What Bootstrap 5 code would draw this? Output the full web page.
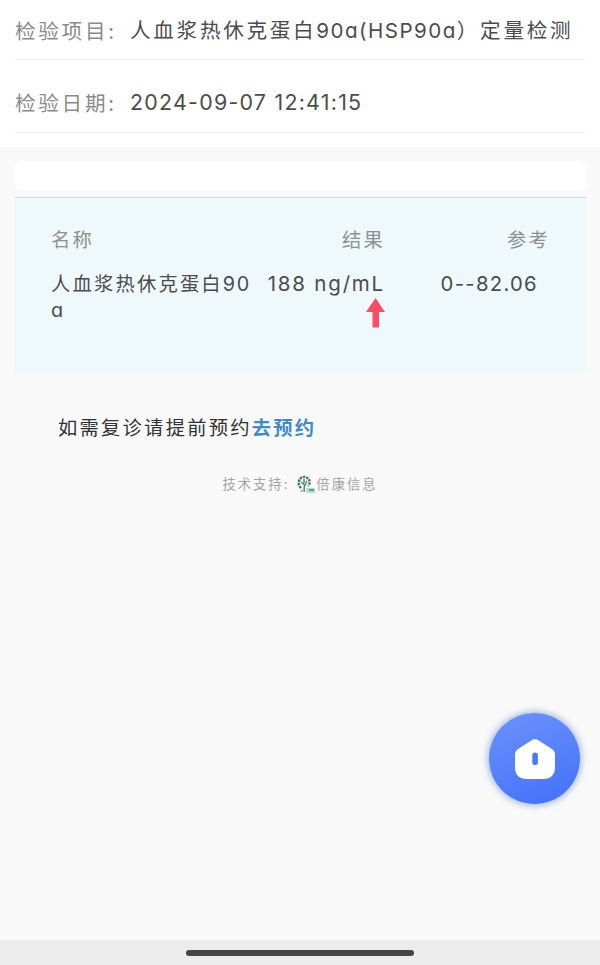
<!DOCTYPE html>
<html lang="zh-CN">
<head>
<meta charset="utf-8">
<meta name="viewport" content="width=device-width, initial-scale=1">
<title>检验结果</title>
<link href="https://cdn.jsdelivr.net/npm/bootstrap@5.3.0/dist/css/bootstrap.min.css" rel="stylesheet">
<style>
body{background:#f9f9f9;font-family:"Noto Sans CJK SC",sans-serif;color:#4b4c4e;height:965px;overflow:hidden}
.latin{font-family:Inter,"Noto Sans",sans-serif;font-feature-settings:"cv11";font-weight:400}
.info{height:147px;padding:0 15px;font-size:20.6px;letter-spacing:2.7px}
.info-row{height:73px;border-bottom:1px solid #f3f3f3;white-space:nowrap}
.info-row:first-child{height:60px;padding-top:1px}
.info-row:last-child{padding-top:12px}
.info-key{width:115px;color:#8b8b8b;flex:none}
.info-row:first-child .latin{letter-spacing:1.45px}
.info-row:last-child .latin{letter-spacing:1.25px;font-size:21.4px;padding-top:1px}
.bar{height:29px;margin:14px 14px 7px 15px;border-radius:7px}
.panel{height:176px;margin:0 14px 0 15px;padding:27px 0 0 36px;background:#eff8fb;border-top:1px solid #cbdedb;font-size:19.3px;letter-spacing:2.2px;line-height:28px}
.c1{width:205px}.c2{width:129px}.c3{width:165px}
.head{color:#8d9192;height:44px}
.c1 .latin{letter-spacing:1.7px;font-size:19.8px;line-height:26px}
.c2 .latin{letter-spacing:1.8px;font-size:20.5px}
.c3 .latin{letter-spacing:1.3px;font-size:20.3px}
.ref{padding-right:12px}
.arrow{width:19px;height:30px}
.again{margin:38px 0 0 58px;font-size:19.3px;letter-spacing:2.25px;line-height:32px;color:#303133}
.again a{color:#448bc4}
.tech{margin-top:30px;font-size:13.3px;letter-spacing:2px;line-height:22px;color:#a4a4a4}
.tech-logo{margin:0 0 0 8px}
.home{right:20px;top:713px;width:91px;height:91px;background:linear-gradient(160deg,#6c92fa,#4270fa);box-shadow:0 0 7px 1px rgba(65,115,180,.55)}
.sysbar{top:940px;height:25px;background:#ececec;padding-top:10px}
.grip{width:228px;height:6px;background:#454545}
</style>
</head>
<body class="position-relative">
<section class="info bg-white">
  <div class="info-row d-flex align-items-center"><span class="info-key">检验项目:</span><span>人血浆热休克蛋白<span class="latin">90a(HSP90a</span>）定量检测</span></div>
  <div class="info-row d-flex align-items-center"><span class="info-key">检验日期:</span><span class="latin">2024-09-07 12:41:15</span></div>
</section>
<div class="bar bg-white"></div>
<section class="panel">
  <div class="d-flex head"><div class="c1">名称</div><div class="c2 text-end">结果</div><div class="c3 text-end">参考</div></div>
  <div class="d-flex">
    <div class="c1">人血浆热休克蛋白<span class="latin">90</span><span class="latin d-block">a</span></div>
    <div class="c2 text-end"><span class="latin">188 ng/mL</span><svg class="arrow d-block ms-auto" viewBox="0 0 19 30"><path d="M9.500 0 19 14H13V29.500H6.500V14H0Z" fill="#ff4c67"/></svg></div>
    <div class="c3 text-end ref"><span class="latin">0--82.06</span></div>
  </div>
</section>
<p class="again mb-0">如需复诊请提前预约<a href="#" class="text-decoration-none fw-bold">去预约</a></p>
<footer class="tech d-flex justify-content-center align-items-center"><span>技术支持:</span>
  <svg class="tech-logo" width="19" height="19" viewBox="0 0 19 19"><g fill="none" stroke="#467858" stroke-width="2.400" stroke-dasharray="2.400 .9"><path d="M4 13C-1 8 3 1 8 2S14 8 11 11"/></g><path d="M7 17 7.500 10 4 7M7.500 11 10 6M7 8V4" fill="none" stroke="#55836a" stroke-width="1.500"/><path d="M3 15h4v2H4z" fill="#a8c9a5"/><path d="M9 13h9v5H9z" fill="#b9dfd2"/><path d="M12 14h5v2h-5z" fill="#659d88"/></svg><span>倍康信息</span></footer>
<a href="#" class="home rounded-circle position-absolute d-flex align-items-center justify-content-center" aria-label="首页"><svg width="42" height="42" viewBox="0 0 42 42"><path d="M18.500 1.800Q21 0 23.500 1.800L38 11Q41 13 41 17V29Q41 41 29 41H13Q1 41 1 29V17Q1 13 4 11Z" fill="#fff"/><rect x="18.300" y="14.500" width="5.600" height="12.500" rx="2.800" fill="#4d77fa"/></svg></a>
<div class="sysbar position-absolute start-0 w-100"><div class="grip rounded-pill mx-auto"></div></div>
<script src="https://cdn.jsdelivr.net/npm/bootstrap@5.3.0/dist/js/bootstrap.bundle.min.js"></script>
</body>
</html>
